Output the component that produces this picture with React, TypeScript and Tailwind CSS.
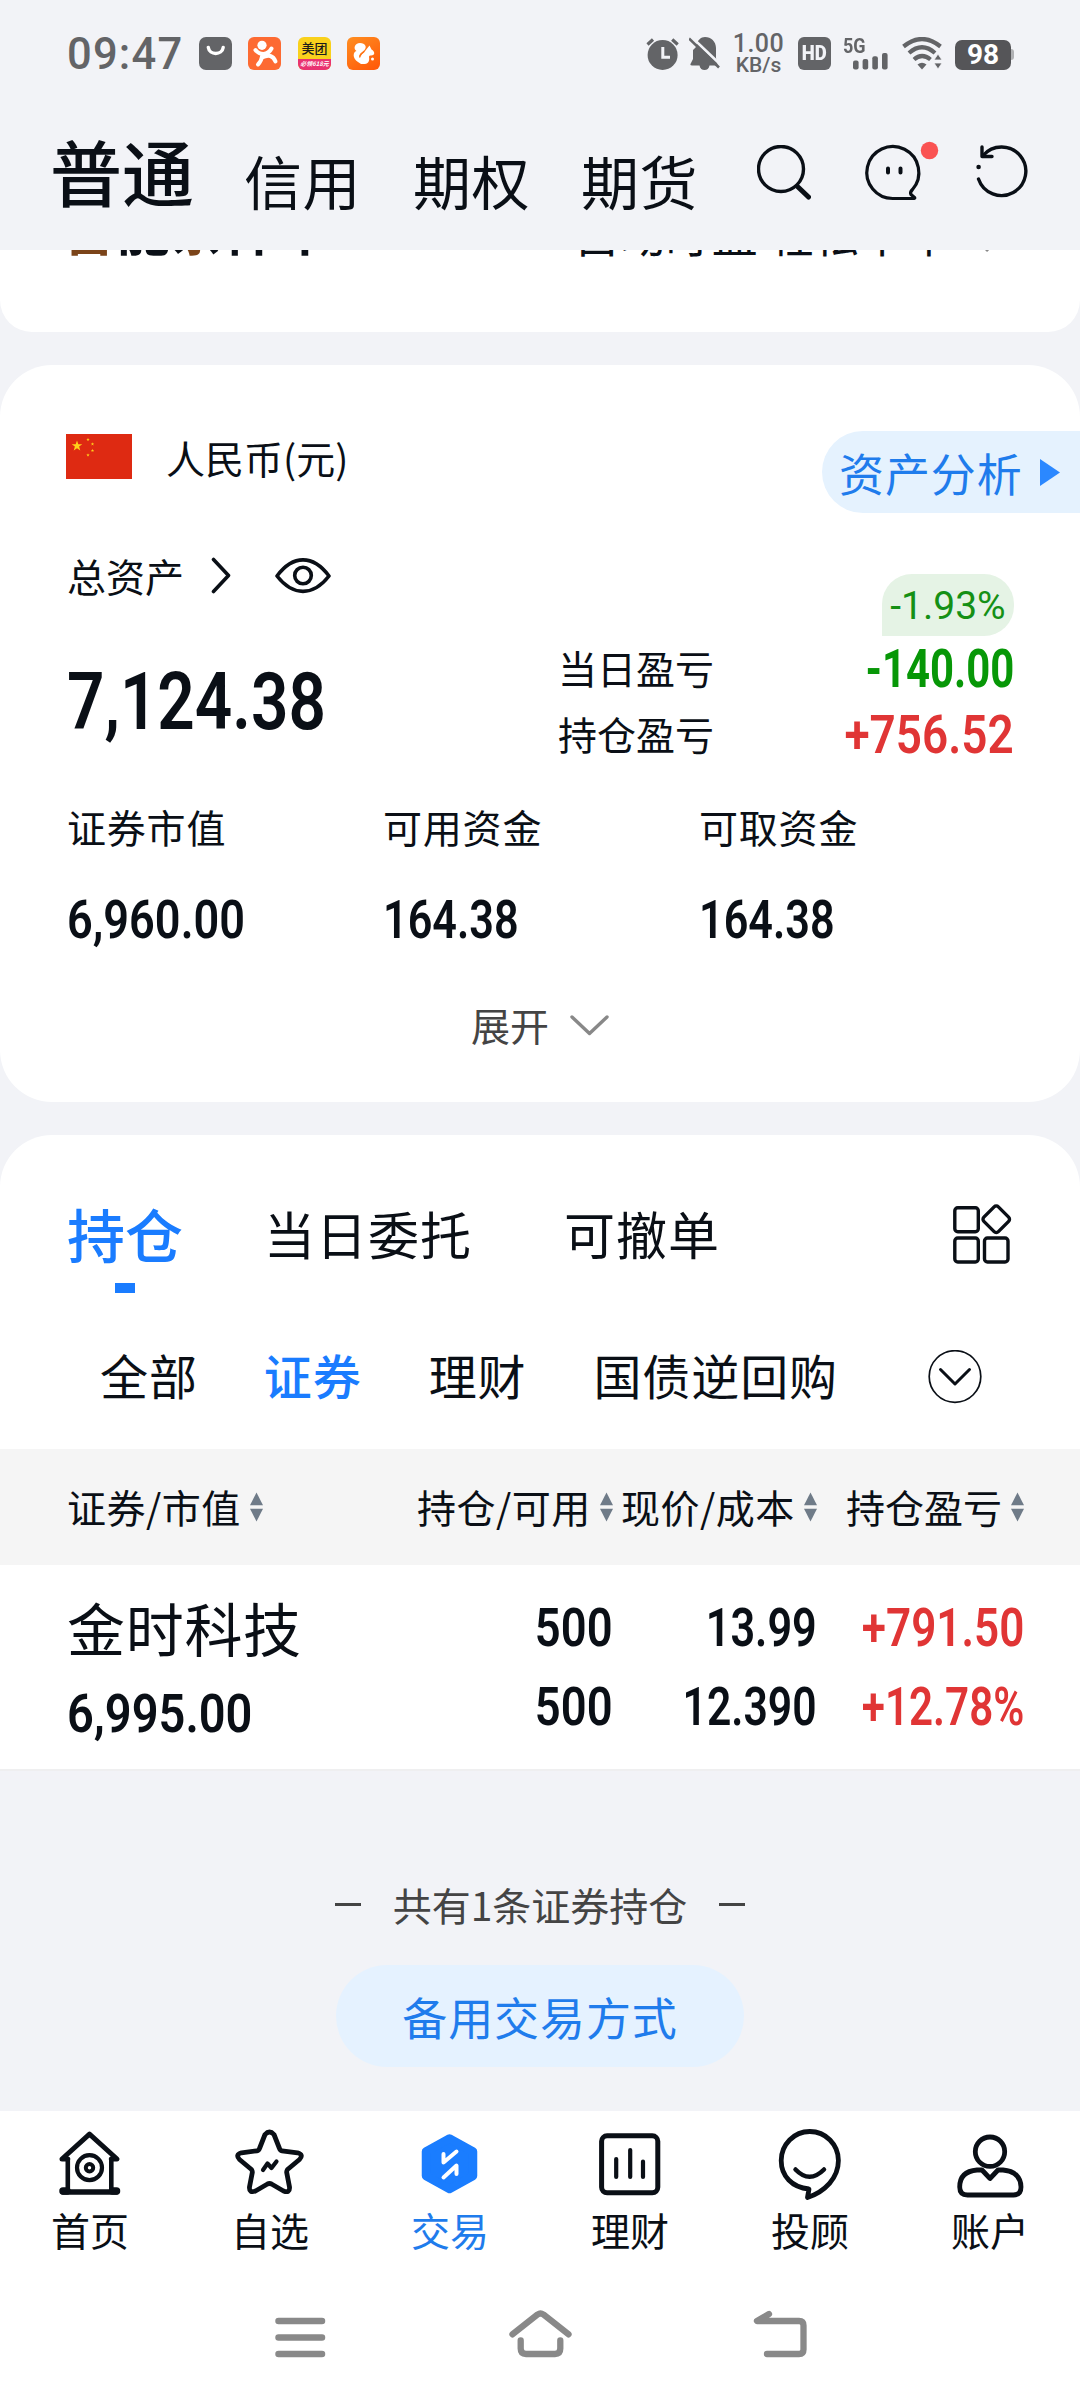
import type { ReactNode } from 'react';

const cjk = "font-['Noto_Sans_CJK_SC',sans-serif]";
const din = "block w-max whitespace-nowrap font-['Roboto',sans-serif] leading-none";

const SortIcon = ({ className }: { className: string }) => (
    <svg className={className} width="13" height="30" viewBox="0 0 13 30" fill="#6f7b88">
        <path d="M6.5 0.5L13 13.2H0Z" />
        <path d="M6.5 29.5L0 16.8H13Z" />
    </svg>
);

const StatusBar = () => {
    return (
        <div className="flex h-[107px] items-center pl-[67px] font-['Roboto',sans-serif] text-[#636467]">
            <span className="w-[132px] pt-[2px] text-[43.5px] font-medium leading-none tracking-[1.2px]">09:47</span>

            <svg width="33" height="33" viewBox="0 0 33 33" fill="none">
                <rect width="33" height="33" rx="7" fill="#636467" />
                <path d="M9.3 10.5C10.5 18.5 23 18.5 24.2 10.5" stroke="white" strokeWidth="3.4" strokeLinecap="round" />
            </svg>

            <svg className="ml-4" width="33" height="33" viewBox="0 0 33 33" fill="none" stroke="white" strokeWidth="4" strokeLinecap="round">
                <rect width="33" height="33" rx="6" fill="#fd6a32" stroke="none" />
                <circle cx="14" cy="8.3" r="4.6" fill="white" stroke="none" />
                <path d="M7.5 13Q10.5 17 15.5 17Q21 16.5 23.5 11.5" />
                <path d="M14.5 18Q13.5 24 10 27.5" />
                <path d="M14 20.5Q24 15.5 27.5 24.5" />
            </svg>

            <div className={`${cjk} ml-[17px] flex h-[33px] w-[33px] flex-col overflow-hidden rounded-[6px] bg-[#f9d11c] text-center`}>
                <span className="h-[22px] text-[13px] font-medium leading-[22px] text-[#1c1c1c]">美团</span>
                <span className="h-[11px] whitespace-nowrap bg-[#e93370] text-[6px] font-bold italic leading-[10px] text-white">必领618元</span>
            </div>

            <svg className="ml-4" width="33" height="33" viewBox="0 0 33 33">
                <defs>
                    <linearGradient id="uc" x1="0.2" y1="0" x2="0.8" y2="1">
                        <stop offset="0" stopColor="#ff8a1f" />
                        <stop offset="1" stopColor="#ff5a0a" />
                    </linearGradient>
                </defs>
                <rect width="33" height="33" rx="6" fill="url(#uc)" />
                <path d="M11 25C5 21 6 15 9.5 14C6 12 7.5 6 13 6C18.5 6 20 10 17.5 13C14.5 16 11.5 17 12.5 20.5C13 17.5 16.5 17 18.5 13.5L22.5 8.5L24.5 12.5C28 14.5 28.5 18.5 24 18.5C20.5 18.5 23 21 22 23.5C21.5 25.5 20 27 17.5 27H14Z" fill="white" />
                <path d="M12.5 20.5Q13.5 16.5 17 14.5" stroke="#ff7414" strokeWidth="1.2" fill="none" />
                <circle cx="25.5" cy="22" r="1.5" fill="white" />
            </svg>

            <svg className="ml-[266px]" width="33" height="33" viewBox="0 0 33 33" fill="none" stroke="#636467" strokeWidth="3.2">
                <circle cx="16.6" cy="18" r="15" fill="#636467" stroke="none" />
                <path d="M16.8 10V20.3H24" stroke="#f2f3f7" strokeWidth="3" />
                <path d="M1.5 7.5L7 2.5M26.2 2.5L31.7 7.5" />
            </svg>
            <svg className="ml-[10px]" width="31" height="33" viewBox="0 0 31 33">
                <path d="M7 10C8 3 12 0 16 0C22 0 27 4.5 27 11V21L28.5 27C29 29 28 28.5 20.5 28.5C20 31.5 18 33 15.5 33C13 33 11 31.5 10.5 28.5H3C1 28.5 1 27.5 2 26L4 22V13Z" fill="#636467" />
                <path d="M1 -1.5L33 29" stroke="#f2f3f7" strokeWidth="2.6" />
                <path d="M0 1.5L30 30.5" stroke="#636467" strokeWidth="2.6" />
            </svg>

            <div className="ml-[12px] flex w-[53px] flex-col items-center whitespace-nowrap font-medium">
                <span className="text-[25px] leading-[23px] tracking-[0.5px]">1.00</span>
                <span className="text-[21px] leading-[21px]">KB/s</span>
            </div>

            <div className="ml-[13px] flex h-[33px] w-[33px] items-center justify-center rounded-[6px] bg-[#636467]">
                <span className="scale-x-[0.88] text-[21px] font-black leading-none text-[#f2f3f7]">HD</span>
            </div>

            <div className="ml-[12px] flex h-[32px] w-[46px] flex-col">
                <span className="block w-max origin-left scale-x-[0.9] text-[20px] font-bold leading-[17px]">5G</span>
                <svg className="-mt-[2px] ml-[10px]" width="35" height="17" viewBox="0 0 35 17" fill="#636467">
                    <rect x="0" y="7.5" width="5.6" height="9" rx="2" />
                    <rect x="9.6" y="6" width="5.6" height="10.5" rx="2" />
                    <rect x="19.3" y="3.3" width="5.6" height="13.2" rx="2" />
                    <rect x="29" y="0" width="5.6" height="16.5" rx="2" />
                </svg>
            </div>

            <svg className="ml-[13px]" width="40" height="33" viewBox="0 0 40 33" fill="none" stroke="#636467" strokeWidth="4.2">
                <path d="M1.5 9.5Q20 -5.5 38.5 9.5" />
                <path d="M7 16Q20 4.5 33 16" />
                <path d="M12 22.5Q20 15.5 28.5 22.5" />
                <path d="M15.5 27.5Q20 24 24.5 27.5L20 32.5Z" fill="#636467" stroke="none" />
                <path d="M36 17L40 23H32ZM36 32L40 26H32Z" fill="#636467" stroke="#f2f3f7" strokeWidth="0.8" />
            </svg>

            <div className="mt-[2px] ml-[13px] flex h-[30px] w-[56px] items-center justify-center rounded-[7px] bg-[#555558]">
                <span className="text-[28px] font-bold leading-none text-white">98</span>
            </div>
            <div className="mt-[2px] h-[11px] w-[3px] rounded-r-[3px] bg-[#b0b1b4]" />
        </div>
    );
};

const Header = () => {
    return (
        <div className="flex h-[143px] items-start pl-[50px] leading-none">
            <span className="mt-[27px] text-[72px] font-medium">普通</span>
            <span className="mt-[44px] ml-[50px] text-[58px] tracking-[0.5px]">信用</span>
            <span className="mt-[44px] ml-[52px] text-[58px] tracking-[0.5px]">期权</span>
            <span className="mt-[44px] ml-[51px] text-[58px] tracking-[0.5px]">期货</span>

            <svg className="mt-[38px] ml-[59px]" width="54" height="55" viewBox="0 0 54 55" fill="none" stroke="#0a0f16" strokeLinecap="round">
                <circle cx="24" cy="24" r="22.5" strokeWidth="3.4" />
                <path d="M41 42L51.5 52" strokeWidth="5" />
            </svg>
            <svg className="mt-[38px] ml-[55px] overflow-visible" width="55" height="55" viewBox="0 0 55 55" fill="none" stroke="#0a0f16" strokeWidth="3.2" strokeLinecap="round" strokeLinejoin="round">
                <path d="M27.5 53.5A26 26 0 1 1 46.5 44.5C44.5 46.5 44 48 45 49.5L48.5 52.5Q49.5 53.5 47 53.5Z" />
                <path d="M22 23.5V27.5M34.5 23.5V27.5" strokeWidth="4" />
                <circle cx="63.5" cy="5.5" r="8.7" fill="#fa5252" stroke="none" />
            </svg>
            <svg className="mt-[38px] ml-[55px]" width="52" height="53" viewBox="0 0 52 53" fill="none" stroke="#0a0f16" strokeWidth="3.4" strokeLinecap="round" strokeLinejoin="round">
                <path d="M2.5 34A24.3 24.3 0 1 0 7 10.5" />
                <path d="M6 2V11.5H16" />
                <circle cx="2.6" cy="22" r="2.3" fill="#0a0f16" stroke="none" />
            </svg>
        </div>
    );
};

// lower edge of the promo card, scrolled under the header
const PromoCard = () => {
    return (
        <div className="flex h-[82px] items-start justify-between overflow-hidden rounded-b-[32px] bg-white pl-[62px] pr-[78px] leading-none">
            <span className="-mt-[49px] text-[54px] font-bold">
                <span className="text-[#7b4419]">智</span>能
                <span className="bg-[linear-gradient(90deg,#0a0f16_34%,#7b4419_34%,#7b4419_60%,#0a0f16_60%)] bg-clip-text text-transparent">条</span>件单
            </span>
            <div className="-mt-[41px] flex text-[46px]">
                <span>自动盯盘 轻松下单</span>
                <svg className="mt-[16px] ml-[32px]" width="18" height="28" viewBox="0 0 18 28" fill="none" stroke="#888" strokeWidth="3">
                    <path d="M2 2L14 14L2 26" />
                </svg>
            </div>
        </div>
    );
};

const Flag = () => {
    const star = "M0 -5.6L1.3 -1.8H5.3L2.1 0.6L3.3 4.5L0 2.2L-3.3 4.5L-2.1 0.6L-5.3 -1.8H-1.3Z";
    return (
        <svg className="mt-[3px]" width="66" height="45" viewBox="0 0 66 45" fill="#ffd21a">
            <rect width="66" height="45" fill="#de2a12" />
            <path transform="translate(11 12)" d={star} />
            <path transform="translate(22 5.5) scale(0.32)" d={star} />
            <path transform="translate(26.5 10) scale(0.32)" d={star} />
            <path transform="translate(26.5 16.5) scale(0.32)" d={star} />
            <path transform="translate(22 21) scale(0.32)" d={star} />
        </svg>
    );
};

const AssetCard = () => {
    return (
        <div className="mt-[33px] flex h-[737px] flex-col rounded-[52px] bg-white pt-[66px] text-[39px] leading-none">
            <div className="flex h-[82px] items-start pl-[66px]">
                <Flag />
                <span className="mt-[7px] ml-[34px]">人民币(元)</span>
                <div className="ml-auto flex h-[82px] w-[258px] items-center rounded-l-full bg-[#e5f2fe] pl-[17px] text-[#1f7cec]">
                    <span className="text-[45px] tracking-[0.9px]">资产分析</span>
                    <svg className="ml-[17px]" width="20" height="27" viewBox="0 0 20 27" fill="#2b88ff">
                        <path d="M0 0L20 13.5L0 27Z" />
                    </svg>
                </div>
            </div>

            <div className="flex h-[294px] pl-[67px] pr-[66px]">
                <div className="w-[491px] pt-[43px]">
                    <div className="flex items-center">
                        <span>总资产</span>
                        <svg className="ml-[27px]" width="20" height="37" viewBox="0 0 20 37" fill="none" stroke="#0a0f16" strokeWidth="3.6" strokeLinecap="round" strokeLinejoin="round">
                            <path d="M2.5 2.5L17.5 18.5L2.5 34.5" />
                        </svg>
                        <svg className="ml-[44px]" width="56" height="36" viewBox="0 0 56 36" fill="none" stroke="#0a0f16" strokeWidth="3.6" strokeLinejoin="round">
                            <path d="M2 18C18 -3.5 38 -3.5 54 18C38 38.5 18 38.5 2 18Z" />
                            <circle cx="28" cy="17.5" r="8.3" />
                        </svg>
                    </div>
                    <span className={`${din} mt-[67px] origin-left scale-x-[0.82] text-[80px] font-semibold`}>7,124.38</span>
                </div>

                <div className="flex flex-col pt-[135px]">
                    <span>当日盈亏</span>
                    <span className="mt-[27px]">持仓盈亏</span>
                </div>

                <div className="ml-auto flex flex-col items-end pt-[61px]">
                    <div className="flex h-[62px] w-[132px] items-center justify-center rounded-[30px] rounded-bl-none bg-[#e5f3e5] pt-[3px] text-[#159015]">
                        <span className={`${din} text-[39px]`}>-1.93%</span>
                    </div>
                    <span className={`${din} mt-[7px] origin-right scale-x-[0.79] text-[53px] font-bold text-[#079707]`}>-140.00</span>
                    <span className={`${din} mt-[13px] origin-right scale-x-[0.865] text-[53px] font-semibold text-[#e03535]`}>+756.52</span>
                </div>
            </div>

            <div className="grid grid-cols-[316px_316px_316px] pl-[67px] tracking-[0.8px]">
                <div>
                    <span>证券市值</span>
                    <span className={`${din} mt-[47px] origin-left scale-x-[0.835] text-[54px] font-semibold tracking-normal`}>6,960.00</span>
                </div>
                <div>
                    <span>可用资金</span>
                    <span className={`${din} mt-[47px] origin-left scale-x-[0.8] text-[54px] font-semibold tracking-normal`}>164.38</span>
                </div>
                <div>
                    <span>可取资金</span>
                    <span className={`${din} mt-[47px] origin-left scale-x-[0.8] text-[54px] font-semibold tracking-normal`}>164.38</span>
                </div>
            </div>

            <div className="mt-[58px] flex items-center justify-center text-[#444]">
                <span>展开</span>
                <svg className="ml-[21px]" width="39" height="22" viewBox="0 0 39 22" fill="none" stroke="#888" strokeWidth="3.4" strokeLinecap="round" strokeLinejoin="round">
                    <path d="M2 3L19.5 19.5L37 3" />
                </svg>
            </div>
        </div>
    );
};

const HoldingsCard = () => {
    return (
        <div className="mt-[33px] flex h-[636px] flex-col rounded-t-[52px] bg-white leading-none">
            <div className="flex h-[196px] items-start pt-[69px] pl-[67px] pr-[68px]">
                <div className="flex flex-col items-center">
                    <span className="text-[58px] font-medium text-[#1a7cff]">持仓</span>
                    <span className="mt-[21px] h-[10px] w-[20px] bg-[#1a7cff]" />
                </div>
                <span className="mt-[4px] ml-[81px] text-[51px] tracking-[1px]">当日委托</span>
                <span className="mt-[4px] ml-[92px] text-[51px] tracking-[1px]">可撤单</span>
                <svg className="-mt-[1px] ml-auto" width="59" height="62" viewBox="0 0 59 62" fill="none" stroke="#0a0f16" strokeWidth="3.4">
                    <rect x="1.8" y="4.8" width="23.5" height="24" rx="3" />
                    <rect x="1.8" y="35" width="23.5" height="24" rx="3" />
                    <rect x="31.5" y="35" width="23.5" height="24" rx="3" />
                    <rect x="33" y="6" width="20.5" height="20.5" rx="3" transform="rotate(45 43.25 16.25)" />
                </svg>
            </div>

            <div className="flex h-[118px] items-start pt-[19px] pl-[100px] text-[48px] tracking-[0.9px]">
                <span>全部</span>
                <span className="ml-[66px] font-medium text-[#1a7cff]">证券</span>
                <span className="ml-[67px]">理财</span>
                <span className="ml-[67px]">国债逆回购</span>
                <svg className="ml-[90px]" width="54" height="54" viewBox="0 0 54 54" fill="none" stroke="#0a0f16">
                    <circle cx="27" cy="26.5" r="25.8" strokeWidth="1.7" />
                    <path d="M12.5 19.5L27 34L41.5 19.5" strokeWidth="3" strokeLinecap="round" strokeLinejoin="round" />
                </svg>
            </div>

            <div className="flex h-[116px] items-center whitespace-nowrap bg-[#f5f5f5] pl-[67px] text-[39px]">
                <span className="-mt-[2px] w-[171px] tracking-[0.5px]">证券/市值</span>
                <SortIcon className="ml-[12px]" />
                <span className="-mt-[2px] ml-[154px] w-[171px] tracking-[0.5px]">持仓/可用</span>
                <SortIcon className="ml-[12px]" />
                <span className="-mt-[2px] ml-[8px] w-[171px] tracking-[0.5px]">现价/成本</span>
                <SortIcon className="ml-[12px]" />
                <span className="-mt-[2px] ml-[29px]">持仓盈亏</span>
                <SortIcon className="ml-[9px]" />
            </div>

            <div className="flex h-[206px] border-b-2 border-[#efeff0] pl-[67px]">
                <div className="w-[345px] pt-[33px]">
                    <span className="block text-[58px] tracking-[0.7px]">金时科技</span>
                    <span className={`${din} mt-[31px] origin-left scale-x-[0.87] text-[54px] font-semibold`}>6,995.00</span>
                </div>
                <div className="flex w-[201px] flex-col items-end pt-[36px]">
                    <span className={`${din} origin-right scale-x-[0.84] text-[54px] font-semibold`}>500</span>
                    <span className={`${din} mt-[25px] origin-right scale-x-[0.84] text-[54px] font-semibold`}>500</span>
                </div>
                <div className="flex w-[204px] flex-col items-end pt-[36px]">
                    <span className={`${din} origin-right scale-x-[0.8] text-[54px] font-semibold`}>13.99</span>
                    <span className={`${din} mt-[25px] origin-right scale-x-[0.79] text-[54px] font-semibold`}>12.390</span>
                </div>
                <div className="flex w-[207px] flex-col items-end pt-[36px] text-[#e03535]">
                    <span className={`${din} origin-right scale-x-[0.815] text-[54px] font-semibold`}>+791.50</span>
                    <span className={`${din} mt-[25px] origin-right scale-x-[0.78] text-[54px] font-semibold`}>+12.78%</span>
                </div>
            </div>
        </div>
    );
};

const ListFooter = () => {
    return (
        <div className="flex h-[340px] flex-col items-center pt-[114px] leading-none">
            <div className="flex items-center text-[39px] text-[#444]">
                <span className="h-[3px] w-[26px] bg-[#444]" />
                <span className="mx-[32px]">共有1条证券持仓</span>
                <span className="h-[3px] w-[26px] bg-[#444]" />
            </div>
            <button className="mt-[41px] flex h-[102px] w-[408px] items-center justify-center rounded-full bg-[#e5f2ff] text-[45px] leading-none tracking-[0.9px] text-[#1f7cec]">
                备用交易方式
            </button>
        </div>
    );
};

const NavItem = ({ label, active, children }: { label: string; active?: boolean; children: ReactNode }) => (
    <div className={`flex w-[180px] flex-col items-center ${active ? "text-[#1f7cec]" : "text-[#0a0f16]"}`}>
        <svg className="overflow-visible" width="66" height="66" viewBox="0 0 66 66" fill="none" stroke="#0a0f16" strokeWidth="5" strokeLinecap="round" strokeLinejoin="round">
            {children}
        </svg>
        <span className="mt-[14px] text-[39px] leading-none">{label}</span>
    </div>
);

const BottomNav = () => {
    return (
        <div className="flex h-[179px] bg-white pt-[19px]">
            <NavItem label="首页">
                <path d="M10.8 29H5L32.5 4.2L60 29H54.3" />
                <path d="M10.8 30V60M54.3 30V60" strokeWidth="4.6" />
                <path d="M6 62H59.5" strokeWidth="5.5" />
                <path d="M6 61H10M55.5 61H59.5" strokeWidth="7.5" />
                <circle cx="32.5" cy="37.7" r="12.5" strokeWidth="4.2" />
                <circle cx="32.5" cy="37.7" r="3.7" strokeWidth="4" />
            </NavItem>
            <NavItem label="自选">
                <path d="M28 4.5Q32.5 -0.5 37 4.5L42.5 18.5Q43 20.5 45 20.8L60.5 22.8Q67 24.5 62.5 29.5L50.5 39.5Q49.5 41 49.7 42.5L52.5 57Q53 63.5 46.5 61L34.5 54Q32.5 53 30.5 54L18.5 61Q12 63.5 12.5 57L15.3 42.5Q15.5 41 14.5 39.5L2.5 29.5Q-2 24.5 4.5 22.8L20 20.8Q22 20.5 22.5 18.5Z" strokeWidth="4.8" />
                <path d="M26 40L30.5 33.5L34.5 38L39.5 31.5" strokeWidth="4.2" />
            </NavItem>
            <NavItem label="交易" active>
                <path d="M32.5 8.5L56 21.5V46L32.5 59L9 46V21.5Z" fill="#1a7dff" stroke="#1a7dff" strokeWidth="8.5" />
                <path d="M26.5 24V32.5L39.5 21.5M26.5 47.5L39.5 35.5V44" stroke="white" strokeWidth="4" />
            </NavItem>
            <NavItem label="理财">
                <rect x="4.6" y="5.8" width="56.2" height="57" rx="5.5" />
                <path d="M19.2 29V47M33.2 20V47M46 31.5V47" strokeWidth="4.2" />
            </NavItem>
            <NavItem label="投顾">
                <path d="M32 59C15 57.5 4.2 46 4.2 30.5A28.6 29 0 0 1 61.4 30.5C61.4 48 48 61.5 30.5 67.5Z" strokeWidth="4.8" />
                <path d="M18.5 39.5Q32.5 54 47 39.5" strokeWidth="4.5" />
            </NavItem>
            <NavItem label="账户">
                <circle cx="33" cy="21.7" r="14.7" strokeWidth="4.8" />
                <path d="M25 40H20C8 41 2.7 47.5 2.7 57Q2.7 65 10.5 65H56.5Q64 65 64 57C64 47.5 58 41 46 40H41L33 48.5Z" strokeWidth="4.8" />
            </NavItem>
        </div>
    );
};

const SystemNav = () => {
    return (
        <div className="flex h-[110px] items-start bg-white pt-[20px] pl-[275px]">
            <svg width="51" height="48" viewBox="0 0 51 48" stroke="#898989" strokeWidth="6.5" strokeLinecap="round">
                <path d="M3.5 11H47M3.5 27.5H47M3.5 44H47" />
            </svg>
            <svg className="ml-[183px]" width="63" height="48" viewBox="0 0 63 48" fill="none" stroke="#898989" strokeWidth="6.3" strokeLinecap="round" strokeLinejoin="round">
                <path d="M3.5 24.3L28.5 4.5Q31.5 2.5 34.5 4.5L59.5 24.3" />
                <path d="M11.7 30.5V38.5Q11.7 44 17 44H46Q51.3 44 51.3 38.5V30.5" />
            </svg>
            <svg className="ml-[181px]" width="54" height="48" viewBox="0 0 54 48" fill="none" stroke="#898989" strokeWidth="6.3" strokeLinecap="round" strokeLinejoin="round">
                <path d="M16 4L4 11H46Q50.5 11 50.5 15.5V39.5Q50.5 44 46 44H14" />
            </svg>
        </div>
    );
};

export default function App() {
    return (
        <div className={`${cjk} flex h-[2400px] w-[1080px] flex-col overflow-hidden bg-[#f2f3f7] text-[#0a0f16]`}>
            <StatusBar />
            <Header />
            <PromoCard />
            <AssetCard />
            <HoldingsCard />
            <ListFooter />
            <BottomNav />
            <SystemNav />
        </div>
    );
}
